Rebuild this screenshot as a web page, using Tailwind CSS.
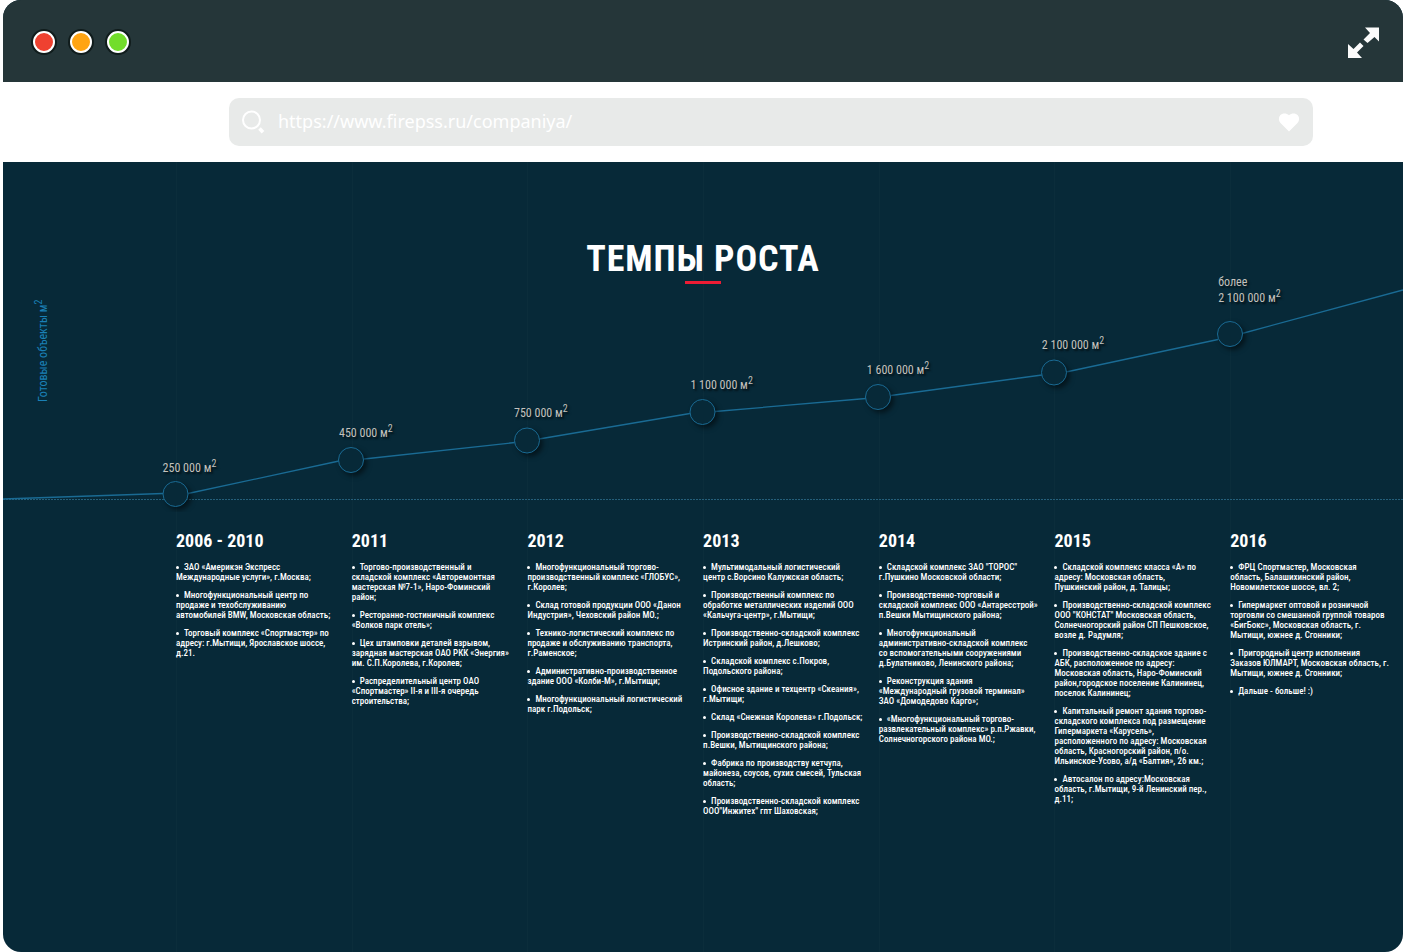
<!DOCTYPE html>
<html lang="ru">
<head>
<meta charset="utf-8">
<meta name="viewport" content="width=device-width, initial-scale=1">
<title>Темпы роста</title>
<script src="https://cdn.jsdelivr.net/npm/@tailwindcss/browser@4"></script>
</head>
<body class="bg-white font-['Roboto_Condensed','Roboto','Liberation_Sans_Narrow',sans-serif] text-white">
<div class="mx-[3px] flex min-h-screen flex-col overflow-hidden rounded-[18px] bg-[#072938]">

  <header class="flex h-[82px] shrink-0 items-center justify-between bg-[#253639] pt-px pr-6 pl-[30px]">
    <div class="flex gap-[15px]">
      <button type="button" aria-label="Закрыть" class="size-[22px] rounded-full border-2 border-white bg-[#ef4130] ring-2 ring-[#101c1c]"></button>
      <button type="button" aria-label="Свернуть" class="size-[22px] rounded-full border-2 border-white bg-[#ffa413] ring-2 ring-[#101c1c]"></button>
      <button type="button" aria-label="Развернуть" class="size-[22px] rounded-full border-2 border-white bg-[#72dd2b] ring-2 ring-[#101c1c]"></button>
    </div>
    <button type="button" aria-label="Во весь экран" class="pt-0.5">
      <svg class="block size-[31px]" viewBox="0 0 31 31" fill="#fbfbfb"><path d="M17 .5H31V14.500L26.500 10L19.500 16L15.500 12.500L22 6Z M0 17L5.500 22L12 15.500L15.500 19L9 25.500L14 31H0Z"/></svg>
    </button>
  </header>

  <div class="flex h-20 shrink-0 items-center bg-white pr-[90px] pl-[226px]">
    <div class="flex h-12 flex-1 items-center rounded-[10px] bg-[#e8eae9] pr-3 pl-[13px]">
      <svg class="mr-3 size-6 shrink-0" viewBox="0 0 24 24" fill="none" stroke="#fff"><circle cx="9.500" cy="10" r="8.500" stroke-width="2"/><path d="M17.500 18.500L21 22.300" stroke-width="3.500"/></svg>
      <input type="text" aria-label="Адрес страницы" value="https://www.firepss.ru/companiya/" class="min-w-0 flex-1 bg-transparent pb-0.5 font-['Noto_Sans',sans-serif] text-lg text-white outline-none">
      <button type="button" aria-label="В избранное"><svg class="block h-5 w-6" viewBox="0 0 24 20" fill="#fff"><path d="M12 19.500L3.500 11C1.500 9 1.300 5.500 3.200 3.300C5.400 .8 9.500 .8 12 3.300C14.500 .8 18.600 .8 20.800 3.300C22.700 5.500 22.500 9 20.500 11Z"/></svg></button>
    </div>
  </div>

  <main class="relative flex-1 pb-16">
    <div aria-hidden="true" class="absolute inset-0 grid grid-cols-[1730fr_repeat(6,1757fr)_1728fr]">
      <i></i><i class="border-l border-white/2"></i><i class="border-l border-white/2"></i><i class="border-l border-white/2"></i><i class="border-l border-white/2"></i><i class="border-l border-white/2"></i><i class="border-l border-white/2"></i><i class="border-l border-white/2"></i>
    </div>

    <section class="relative">
      <svg class="block w-full" viewBox="0 0 1400 350" fill="none" stroke="#1a6b94" aria-hidden="true">
        <defs><filter id="shade" x="-50%" y="-50%" width="200%" height="200%" color-interpolation-filters="sRGB"><feDropShadow dx="3" dy="3" stdDeviation="2.500" flood-color="#000" flood-opacity=".5"/></filter></defs>
        <path d="M0 337.500H1400" stroke-dasharray="2 1" stroke="#255f7a"/>
        <path stroke-width="1.300" d="M0 337L160 331.500M185 331.500L336 299M361 297L512 280.500M536 277L687 251.500M712 249.500L863 236.500M888 233.500L1039 213M1063 210L1215 177.500M1239 171.500L1400 128"/>
        <g fill="#072938" filter="url(#shade)">
          <circle cx="172.500" cy="332" r="12.500"/><circle cx="348" cy="298" r="12.500"/><circle cx="524" cy="278.500" r="12.500"/><circle cx="699.500" cy="250" r="12.500"/><circle cx="875" cy="235" r="12.500"/><circle cx="1051" cy="210.500" r="12.500"/><circle cx="1227" cy="172" r="12.500"/>
        </g>
      </svg>
      <div class="absolute inset-x-0 top-[75px] flex flex-col items-center">
        <h1 class="text-4xl leading-[44px] font-bold tracking-wide">ТЕМПЫ РОСТА</h1>
        <span class="h-[3px] w-9 bg-[#ed1c34]"></span>
      </div>
      <p class="absolute top-60 left-8 origin-top-left -rotate-90 text-xs leading-4 whitespace-nowrap text-[#1a80b6] [&_sup]:text-[10px]">Готовые объекты м<sup>2</sup></p>
      <div class="text-xs leading-4 whitespace-nowrap text-[#c4c2be] text-shadow-[2px_2px_2px_#000a] [&_sup]:text-[10px]">
        <p class="absolute top-[85%] left-[11.400%]">250 000 м<sup>2</sup></p>
        <p class="absolute top-[75%] left-[24%]">450 000 м<sup>2</sup></p>
        <p class="absolute top-[69.500%] left-[36.500%]">750 000 м<sup>2</sup></p>
        <p class="absolute top-[61.400%] left-[49.100%]">1 100 000 м<sup>2</sup></p>
        <p class="absolute top-[57%] left-[61.700%]">1 600 000 м<sup>2</sup></p>
        <p class="absolute top-[50.100%] left-[74.200%]">2 100 000 м<sup>2</sup></p>
        <p class="absolute top-[32%] left-[86.800%]">более<br>2 100 000 м<sup>2</sup></p>
      </div>
    </section>

    <div class="relative grid grid-cols-[1730fr_repeat(6,1757fr)_1728fr] pt-[17px] text-[9px] leading-[10px] font-medium [&_h2]:mb-[9px] [&_h2]:text-lg [&_h2]:leading-6 [&_h2]:font-bold [&_li]:whitespace-nowrap [&_li]:before:mr-[5px] [&_li]:before:inline-block [&_li]:before:size-[3px] [&_li]:before:rounded-full [&_li]:before:bg-white [&_li]:before:align-middle [&_li]:before:content-[''] [&_ul]:space-y-2">
      <section class="col-start-2">
        <h2>2006 - 2010</h2>
        <ul>
          <li>ЗАО «Америкэн Экспресс<br>Международные услуги», г.Москва;</li>
          <li>Многофункциональный центр по<br>продаже и техобслуживанию<br>автомобилей BMW, Московская область;</li>
          <li>Торговый комплекс «Спортмастер» по<br>адресу: г.Мытищи, Ярославское шоссе,<br>д.21.</li>
        </ul>
      </section>
      <section>
        <h2>2011</h2>
        <ul>
          <li>Торгово-производственный и<br>складской комплекс «Авторемонтная<br>мастерская №7-1», Наро-Фоминский<br>район;</li>
          <li>Ресторанно-гостиничный комплекс<br>«Волков парк отель»;</li>
          <li>Цех штамповки деталей взрывом,<br>зарядная мастерская ОАО РКК «Энергия»<br>им. С.П.Королева, г.Королев;</li>
          <li>Распределительный центр ОАО<br>«Спортмастер» II-я и III-я очередь<br>строительства;</li>
        </ul>
      </section>
      <section>
        <h2>2012</h2>
        <ul>
          <li>Многофункциональный торгово-<br>производственный комплекс «ГЛОБУС»,<br>г.Королев;</li>
          <li>Склад готовой продукции ООО «Данон<br>Индустрия», Чеховский район МО.;</li>
          <li>Технико-логистический комплекс по<br>продаже и обслуживанию транспорта,<br>г.Раменское;</li>
          <li>Административно-производственное<br>здание ООО «Колби-М», г.Мытищи;</li>
          <li>Многофункциональный логистический<br>парк г.Подольск;</li>
        </ul>
      </section>
      <section>
        <h2>2013</h2>
        <ul>
          <li>Мультимодальный логистический<br>центр с.Ворсино Калужская область;</li>
          <li>Производственный комплекс по<br>обработке металлических изделий ООО<br>«Кальчуга-центр», г.Мытищи;</li>
          <li>Производственно-складской комплекс<br>Истринский район, д.Лешково;</li>
          <li>Складской комплекс с.Покров,<br>Подольского района;</li>
          <li>Офисное здание и техцентр «Скеания»,<br>г.Мытищи;</li>
          <li>Склад «Снежная Королева» г.Подольск;</li>
          <li>Производственно-складской комплекс<br>п.Вешки, Мытищинского района;</li>
          <li>Фабрика по производству кетчупа,<br>майонеза, соусов, сухих смесей, Тульская<br>область;</li>
          <li>Производственно-складской комплекс<br>ООО"Инжитех" гпт Шаховская;</li>
        </ul>
      </section>
      <section>
        <h2>2014</h2>
        <ul>
          <li>Складской комплекс ЗАО "ТОРОС"<br>г.Пушкино Московской области;</li>
          <li>Производственно-торговый и<br>складской комплекс ООО «Антаресстрой»<br>п.Вешки Мытищинского района;</li>
          <li>Многофункциональный<br>административно-складской комплекс<br>со вспомогательными сооружениями<br>д.Булатниково, Ленинского района;</li>
          <li>Реконструкция здания<br>«Международный грузовой терминал»<br>ЗАО «Домодедово Карго»;</li>
          <li>«Многофункциональный торгово-<br>развлекательный комплекс» р.п.Ржавки,<br>Солнечногорского района МО.;</li>
        </ul>
      </section>
      <section>
        <h2>2015</h2>
        <ul>
          <li>Складской комплекс класса «А» по<br>адресу: Московская область,<br>Пушкинский район, д. Талицы;</li>
          <li>Производственно-складской комплекс<br>ООО "КОНСТАТ" Московская область,<br>Солнечногорский район СП Пешковское,<br>возле д. Радумля;</li>
          <li>Производственно-складское здание с<br>АБК, расположенное по адресу:<br>Московская область, Наро-Фоминский<br>район,городское поселение Калининец,<br>поселок Калининец;</li>
          <li>Капитальный ремонт здания торгово-<br>складского комплекса под размещение<br>Гипермаркета «Карусель»,<br>расположенного по адресу: Московская<br>область, Красногорский район, п/о.<br>Ильинское-Усово, а/д «Балтия», 26 км.;</li>
          <li>Автосалон по адресу:Московская<br>область, г.Мытищи, 9-й Ленинский пер.,<br>д.11;</li>
        </ul>
      </section>
      <section>
        <h2>2016</h2>
        <ul>
          <li>ФРЦ Спортмастер, Московская<br>область, Балашихинский район,<br>Новомилетское шоссе, вл. 2;</li>
          <li>Гипермаркет оптовой и розничной<br>торговли со смешанной группой товаров<br>«БигБокс», Московская область, г.<br>Мытищи, южнее д. Сгонники;</li>
          <li>Пригородный центр исполнения<br>Заказов ЮЛМАРТ, Московская область, г.<br>Мытищи, южнее д. Сгонники;</li>
          <li>Дальше - больше! :)</li>
        </ul>
      </section>
    </div>
  </main>
</div>
</body>
</html>
